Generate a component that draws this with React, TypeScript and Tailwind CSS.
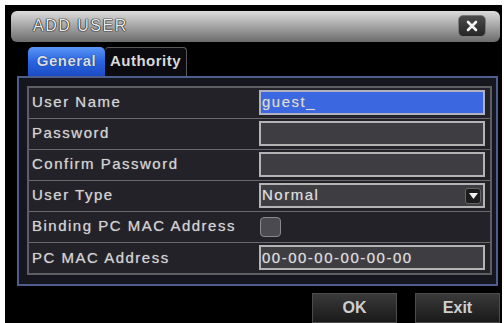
import React from 'react';

const labelText = "text-[15px] tracking-[1.5px] text-[#d2d2d2] [text-shadow:0_0_1px_#9a9a9a]";

const rows = [
    { label: 'User Name', kind: 'active', value: 'guest_' },
    { label: 'Password', kind: 'input', value: '' },
    { label: 'Confirm Password', kind: 'input', value: '' },
    { label: 'User Type', kind: 'select', value: 'Normal' },
    { label: 'Binding PC MAC Address', kind: 'check', value: '' },
    { label: 'PC MAC Address', kind: 'input', value: '00-00-00-00-00-00' },
];

const Field: React.FC<{ kind: string; value: string }> = ({ kind, value }) => {
    if (kind === 'check') {
        return <div className="h-[20px] w-[21px] ml-[1px] rounded-[4px] border border-[#8a8a8a] bg-[#4a4a50]" />;
    }
    const bg = kind === 'active' ? 'bg-[#3b68e0] border-[#b0b0c0]' : 'bg-[#3d3d42] border-[#b4b4b4]';
    return (
        <div className={`h-[25px] w-[226px] border-2 ${bg} flex items-center justify-between pl-[1px] pr-[2px]`}>
            <span className={`${labelText} text-[#dcdcdc]`}>{value}</span>
            {kind === 'select' && (
                <div className="h-[16px] w-[16px] rounded-[3px] bg-[#1c1c1c] border border-[#666] flex items-center justify-center">
                    <svg width="9" height="6" viewBox="0 0 9 6"><path d="M0 0h9L4.5 6z" fill="#f0f0f0" /></svg>
                </div>
            )}
        </div>
    );
};

export default function App() {
    return (
        <div className="w-[504px] h-[323px] overflow-hidden bg-white pl-[5px] pt-[5px] font-[Liberation_Sans,Arial,sans-serif]">
            <div className="w-[497px] h-full bg-black flex flex-col pt-[6px]">
                <header className="ml-[6px] mr-[2px] h-[31px] rounded-[6px] bg-gradient-to-b from-[#dcdcdc] via-[#a4a4a4] to-[#6c6c6c] flex items-center justify-between pl-[22px] pr-[14px]">
                    <span className="text-[16px] tracking-[1.5px] text-[#ececec] [text-shadow:0_0_1px_#000,0_0_1px_#000,0_0_1px_#000]">ADD USER</span>
                    <div className="h-[22px] w-[28px] rounded-[5px] bg-gradient-to-b from-[#4a4a4a] to-[#262626] border border-[#7a7a7a] flex items-center justify-center">
                        <svg width="12" height="12" viewBox="0 0 12 12">
                            <path d="M2 2l8 8M10 2l-8 8" stroke="#f4f4f4" strokeWidth="2.6" strokeLinecap="round" />
                        </svg>
                    </div>
                </header>

                <div className="mt-[5px] ml-[23px] flex h-[29px]">
                    <div className="w-[77px] rounded-t-[5px] bg-gradient-to-b from-[#5a96f6] via-[#2a64e0] to-[#1c4cc4] flex items-center justify-center text-[15px] font-bold tracking-[0.5px] text-[#d8e0f0] [text-shadow:0_0_1px_#002]">
                        General
                    </div>
                    <div className="w-[82px] rounded-t-[4px] border-t border-r border-[#5a5a5a] bg-[#0c0c10] flex items-center justify-center text-[15px] font-bold tracking-[0.5px] text-[#dadada]">
                        Authority
                    </div>
                </div>

                <section className="ml-[12px] w-[481px] h-[212px] border-2 border-[#4e5e8c] bg-[#16161e] pt-[8px] pl-[8px] pr-[4px] pb-[9px]">
                    <div className="h-full border-2 border-[#5e5e62] bg-[#222228] flex flex-col">
                        {rows.map((row, i) => (
                            <div
                                key={row.label}
                                className={`flex items-center ${i < rows.length - 1 ? 'h-[31px] border-b border-[#6a6a6e]' : 'flex-1'}`}
                            >
                                <div className={`w-[230px] pl-[3px] ${labelText}`}>{row.label}</div>
                                <Field kind={row.kind} value={row.value} />
                            </div>
                        ))}
                    </div>
                </section>

                <footer className="mt-[7px] flex justify-end gap-[18px] pr-[2px]">
                    <button className="h-[30px] w-[85px] border border-[#4c4c4c] bg-gradient-to-b from-[#3a3a3a] to-[#1a1a1a] text-[16px] font-bold text-[#cfcfcf]">
                        OK
                    </button>
                    <button className="h-[30px] w-[85px] border border-[#4c4c4c] bg-gradient-to-b from-[#3a3a3a] to-[#1a1a1a] text-[16px] font-bold text-[#cfcfcf]">
                        Exit
                    </button>
                </footer>
            </div>
        </div>
    );
}
